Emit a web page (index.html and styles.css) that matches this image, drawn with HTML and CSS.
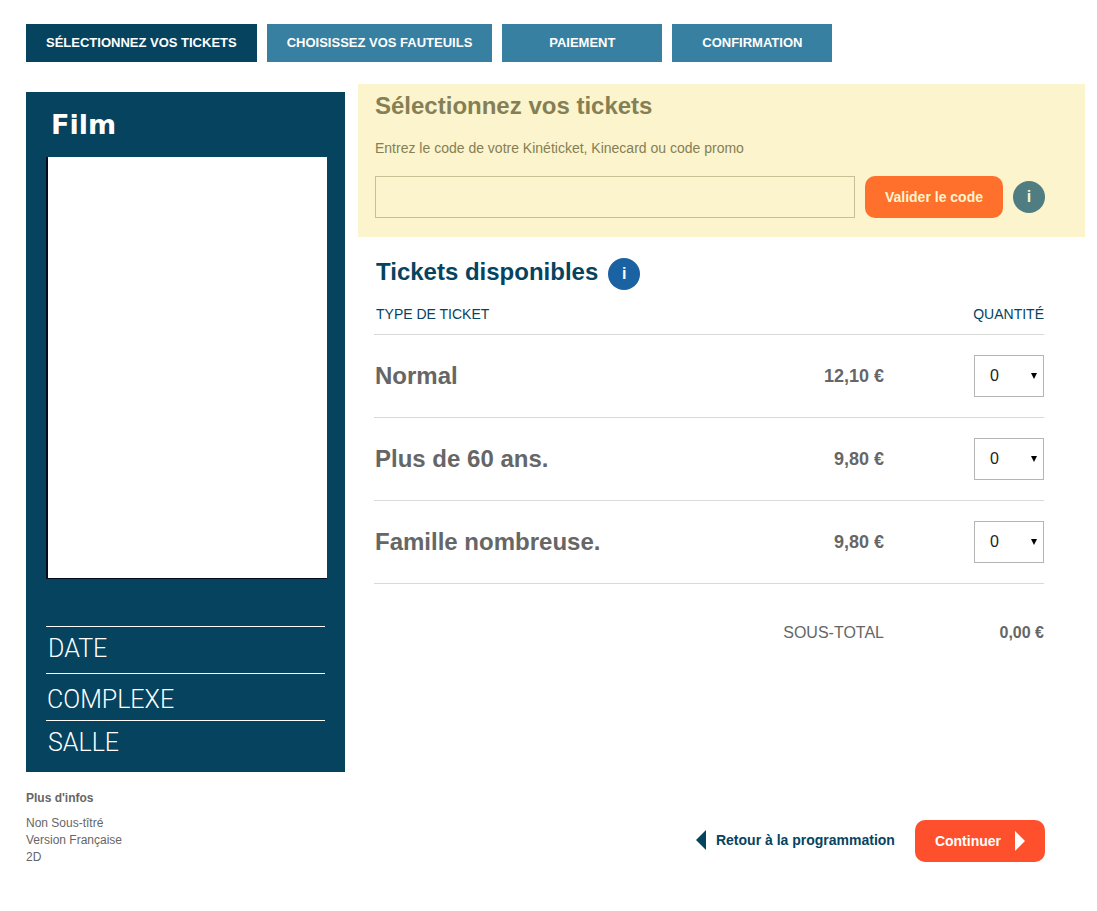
FILE: index.html
```html
<!DOCTYPE html>
<html lang="fr">
<head>
<meta charset="utf-8">
<meta name="viewport" content="width=device-width, initial-scale=1">
<title>Sélectionnez vos tickets</title>
<link rel="stylesheet" href="styles.css">
</head>
<body>
<nav class="steps" aria-label="Étapes">
  <a class="step step-current" href="#tickets" aria-current="step">SÉLECTIONNEZ VOS TICKETS</a>
  <a class="step" href="#fauteuils">CHOISISSEZ VOS FAUTEUILS</a>
  <a class="step" href="#paiement">PAIEMENT</a>
  <a class="step" href="#confirmation">CONFIRMATION</a>
</nav>
<div class="layout">
  <aside class="sidebar">
    <section class="film">
      <h2 class="film-title">Film</h2>
      <div class="poster"></div>
      <ul class="film-details">
        <li class="film-detail">DATE</li>
        <li class="film-detail film-detail-low">COMPLEXE</li>
        <li class="film-detail">SALLE</li>
      </ul>
    </section>
    <section class="infos">
      <h3 class="infos-title">Plus d'infos</h3>
      <p class="infos-line">Non Sous-tîtré</p>
      <p class="infos-line">Version Française</p>
      <p class="infos-line">2D</p>
    </section>
  </aside>
  <main class="main" id="tickets">
    <form class="promo">
      <h1 class="title">Sélectionnez vos tickets</h1>
      <label class="promo-label" for="code">Entrez le code de votre Kinéticket, Kinecard ou code promo</label>
      <div class="promo-row">
        <input class="promo-input" id="code" type="text">
        <button class="button button-code" type="button">Valider le code</button>
        <button class="info info-muted" type="button">i</button>
      </div>
    </form>
    <section class="tickets">
      <div class="tickets-head">
        <h2 class="title tickets-title">Tickets disponibles</h2>
        <button class="info" type="button">i</button>
      </div>
      <table class="table">
        <thead>
          <tr><th class="head-type" scope="col" colspan="2">TYPE DE TICKET</th><th class="head-quantity" scope="col">QUANTITÉ</th></tr>
        </thead>
        <tbody>
          <tr>
            <th class="name" scope="row"><label for="q1">Normal</label></th>
            <td class="price">12,10 €</td>
            <td class="quantity"><span class="select-box"><select class="select" id="q1"><option>0</option><option>1</option><option>2</option><option>3</option></select><svg class="select-arrow" width="6" height="6" viewBox="0 0 6 6" aria-hidden="true"><path d="M0 0h6L3 6z"/></svg></span></td>
          </tr>
          <tr>
            <th class="name" scope="row"><label for="q2">Plus de 60 ans.</label></th>
            <td class="price">9,80 €</td>
            <td class="quantity"><span class="select-box"><select class="select" id="q2"><option>0</option><option>1</option><option>2</option><option>3</option></select><svg class="select-arrow" width="6" height="6" viewBox="0 0 6 6" aria-hidden="true"><path d="M0 0h6L3 6z"/></svg></span></td>
          </tr>
          <tr>
            <th class="name" scope="row"><label for="q3">Famille nombreuse.</label></th>
            <td class="price">9,80 €</td>
            <td class="quantity"><span class="select-box"><select class="select" id="q3"><option>0</option><option>1</option><option>2</option><option>3</option></select><svg class="select-arrow" width="6" height="6" viewBox="0 0 6 6" aria-hidden="true"><path d="M0 0h6L3 6z"/></svg></span></td>
          </tr>
        </tbody>
        <tfoot>
          <tr><td class="total-label" colspan="2">SOUS-TOTAL</td><td class="total">0,00 €</td></tr>
        </tfoot>
      </table>
    </section>
    <div class="actions">
      <a class="back" href="#programmation"><svg width="10" height="20" viewBox="0 0 10 20" aria-hidden="true"><path fill="currentColor" d="M10 0v20L0 10z"/></svg>Retour à la programmation</a>
      <button class="button button-next" type="button">Continuer<svg width="10" height="20" viewBox="0 0 10 20" aria-hidden="true"><path fill="currentColor" d="M0 0v20l10-10z"/></svg></button>
    </div>
  </main>
</div>
</body>
</html>
```

FILE: styles.css
```css
* {
  box-sizing: border-box;
}

body {
  margin: 0;
  padding: 24px 12px 24px 26px;
  background: #fff;
  color: #666;
  font-family: "Liberation Sans", Arial, sans-serif;
  font-size: 14px;
}

h1, h2, h3, p, ul {
  margin: 0;
  padding: 0;
}

button, input, select {
  font-family: inherit;
  margin: 0;
}

.steps {
  display: flex;
  flex-wrap: wrap;
  gap: 10px;
}

.step {
  min-width: 160px;
  padding: 0 20px;
  background: #3780a1;
  color: #fff;
  font-size: 13px;
  font-weight: bold;
  line-height: 38px;
  text-align: center;
  text-decoration: none;
}

.step-current {
  background: #05435f;
}

.layout {
  display: grid;
  grid-template-columns: 319px 1fr;
  gap: 13px;
  margin-top: 22px;
}

.sidebar {
  padding-top: 8px;
}

.film {
  padding: 16px 18px 5px 20px;
  background: #05435f;
  color: #fff;
}

.film-title {
  padding-left: 5px;
  font-family: "DejaVu Sans", Verdana, sans-serif;
  font-size: 27px;
  line-height: 34px;
}

.poster {
  margin-top: 15px;
  aspect-ratio: 281 / 422;
  border-left: 2px solid #020c1c;
  border-bottom: 1px solid #020c1c;
  background: #fff;
}

.film-details {
  margin: 47px 2px 0 0;
  list-style: none;
}

.film-detail {
  height: 47px;
  padding: 2px 2px 0;
  border-top: 1px solid #fff;
  font-family: Roboto, "Liberation Sans", sans-serif;
  font-size: 25px;
  font-weight: 300;
  line-height: 40px;
}

.film-detail-low {
  padding: 6px 1px 0;
}

.infos {
  padding-top: 18px;
  font-size: 12px;
  line-height: 17px;
}

.infos-title {
  margin-bottom: 8px;
  font-size: 12px;
}

.main {
  display: flex;
  flex-direction: column;
  padding-bottom: 4px;
}

.promo {
  padding: 8px 40px 19px 17px;
  background: #fcf4cc;
  color: #857f55;
}

.title {
  font-size: 24px;
  line-height: 28px;
}

.promo-label {
  display: block;
  margin: 18px 0;
  line-height: 20px;
}

.promo-row {
  display: flex;
  align-items: center;
  gap: 10px;
}

.promo-input {
  flex: 1;
  min-width: 0;
  height: 42px;
  padding: 0 14px;
  border: 1px solid #c6c095;
  background: transparent;
  font-size: 16px;
}

.button {
  height: 42px;
  padding: 0 20px;
  border: 0;
  border-radius: 10px;
  font-size: 14px;
  font-weight: bold;
}

.button-code {
  background: #ff702d;
  color: #fcf4cc;
}

.info {
  width: 32px;
  height: 32px;
  padding: 0;
  border: 0;
  border-radius: 50%;
  background: #1b62a2;
  color: #fff;
  font-size: 16px;
  font-weight: bold;
}

.info-muted {
  background: #4f7d82;
  color: #fcf4cc;
}

.tickets {
  padding: 21px 41px 0 16px;
}

.tickets-head {
  display: flex;
  align-items: flex-start;
  gap: 10px;
  padding-left: 2px;
}

.tickets-title {
  color: #05435f;
}

.table {
  width: 100%;
  border-collapse: separate;
  border-spacing: 0;
}

.table th, .table td {
  padding: 0;
}

.table thead th {
  height: 45px;
  padding-top: 4px;
  border-bottom: 1px solid #d9d9d9;
  color: #05435f;
  font-weight: normal;
}

.table .head-type {
  padding-left: 2px;
  text-align: left;
}

.head-quantity {
  text-align: right;
}

.table tbody th, .table tbody td {
  height: 83px;
  border-bottom: 1px solid #d9d9d9;
}

.table .name {
  padding-left: 1px;
  font-size: 24px;
  text-align: left;
}

.price {
  font-size: 18px;
  font-weight: bold;
  text-align: right;
}

.quantity {
  width: 160px;
}

.select-box {
  display: block;
  position: relative;
  width: 70px;
  margin-left: auto;
}

.select {
  display: block;
  width: 100%;
  height: 42px;
  padding: 0 15px 2px;
  border: 1px solid #b5b5b5;
  border-radius: 0;
  background: #fff;
  color: #222;
  font-size: 16px;
  appearance: none;
}

.select-arrow {
  position: absolute;
  top: 18px;
  right: 7px;
  fill: #000;
  pointer-events: none;
}

.table tfoot td {
  height: 98px;
  font-size: 16px;
  text-align: right;
}

.total {
  font-weight: bold;
}

.actions {
  display: flex;
  align-items: center;
  justify-content: flex-end;
  gap: 20px;
  margin-top: auto;
  padding-right: 40px;
}

.back {
  display: flex;
  align-items: center;
  gap: 10px;
  padding-bottom: 3px;
  color: #05435f;
  font-weight: bold;
  text-decoration: none;
}

.button-next {
  display: flex;
  align-items: center;
  gap: 14px;
  background: #ff502d;
  color: #fff;
}

@media (max-width: 800px) {
  .layout {
    grid-template-columns: 1fr;
  }
}
```
